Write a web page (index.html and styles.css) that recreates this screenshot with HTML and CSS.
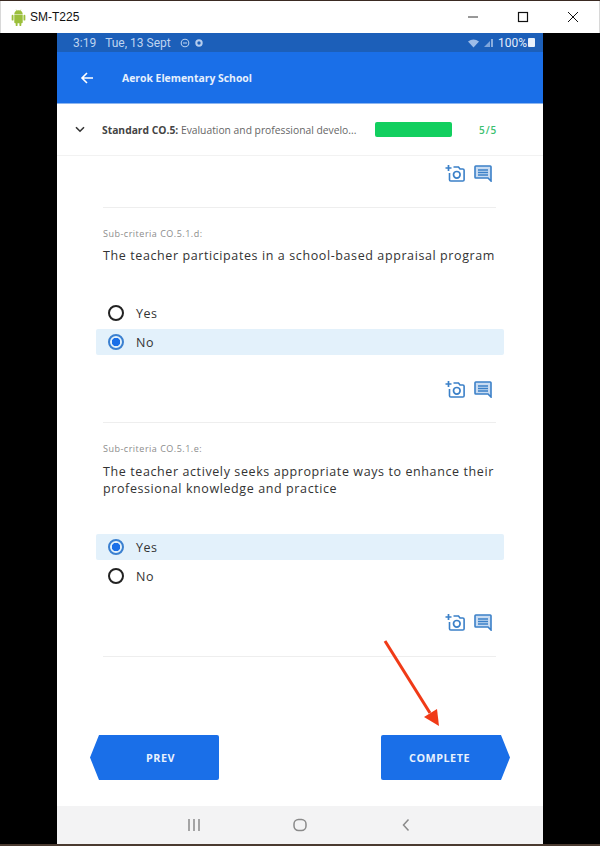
FILE: index.html
```html
<!DOCTYPE html>
<html lang="en">
<head>
<meta charset="utf-8">
<title>SM-T225</title>
<link rel="stylesheet" href="styles.css">
</head>
<body>
<svg class="defs" width="0" height="0" aria-hidden="true">
  <symbol id="cam" viewBox="0 0 20 18">
    <path d="M.5 4h6M3.500 1v6" fill="none" stroke="currentColor" stroke-width="1.700"/>
    <path d="M4.500 9v6.700a1.300 1.300 0 0 0 1.300 1.300h12a1.300 1.300 0 0 0 1.300-1.300V6.300A1.300 1.300 0 0 0 17.800 5h-2.800l-1.500-2H8.500" fill="none" stroke="currentColor" stroke-width="1.600"/>
    <circle cx="11.800" cy="10.800" r="3.300" fill="none" stroke="currentColor" stroke-width="1.700"/>
  </symbol>
  <symbol id="note" viewBox="0 0 18 17">
    <path d="M1.800 1h14.400a.8.800 0 0 1 .8.800V16l-3-3H1.800a.8.800 0 0 1-.8-.8V1.800a.8.800 0 0 1 .8-.8z" fill="#c9dcf2" stroke="currentColor" stroke-width="1.600"/>
    <path d="M4 5h10M4 7.500h10M4 10h10" stroke="currentColor" stroke-width="1.400"/>
  </symbol>
</svg>
<div class="window">
  <header class="titlebar">
    <svg class="droid" viewBox="0 0 16 18" width="15" height="17"><path fill="#9bbf3b" d="M3.500 6h9v8a1 1 0 0 1-1 1H11v2.200a1 1 0 0 1-2 0V15H7v2.200a1 1 0 0 1-2 0V15h-.5a1 1 0 0 1-1-1zM1.700 6a1 1 0 0 1 1 1v4.300a1 1 0 0 1-2 0V7a1 1 0 0 1 1-1zm12.600 0a1 1 0 0 1 1 1v4.300a1 1 0 0 1-2 0V7a1 1 0 0 1 1-1zM3.500 5.400C3.600 3.700 4.500 2.500 5.700 1.800L5 .6l.4-.2.700 1.200a5 5 0 0 1 3.800 0l.7-1.200.4.200-.7 1.200c1.200.7 2.100 1.900 2.200 3.600z"/></svg>
    <span class="app-name">SM-T225</span>
    <div class="win-controls">
      <svg viewBox="0 0 12 12" width="12" height="12"><path d="M1 6h10" stroke="#333" stroke-width="1"/></svg>
      <svg viewBox="0 0 12 12" width="12" height="12"><rect x="1.500" y="1.500" width="9" height="9" fill="none" stroke="#111" stroke-width="1.200"/></svg>
      <svg viewBox="0 0 12 12" width="12" height="12"><path d="M1 1l10 10M11 1L1 11" stroke="#111" stroke-width="1"/></svg>
    </div>
  </header>
  <div class="stage">
    <main class="phone">
      <div class="status">
        <span class="status-time">3:19</span>
        <span class="status-left">Tue, 13 Sept</span>
        <svg class="status-ico" viewBox="0 0 26 10" width="26" height="10"><circle cx="5" cy="5" r="3.800" fill="none" stroke="#b5cdee" stroke-width="1.100"/><path d="M3 5h4" stroke="#b5cdee" stroke-width="1.100"/><circle cx="19" cy="5" r="2.700" fill="none" stroke="#b5cdee" stroke-width="2"/></svg>
        <span class="spacer"></span>
        <svg viewBox="0 0 27 10" width="27" height="10"><path d="M1 3.500a9 9 0 0 1 11 0L6.500 9.500z" fill="#9dbce8"/><path d="M17 9l6-6v6z" fill="#7fa6dc"/><path d="M25 1v8" stroke="#d5e3f6" stroke-width="1.200"/></svg>
        <span class="battery-text">100%</span>
        <span class="battery"></span>
      </div>
      <div class="appbar">
        <svg viewBox="0 0 14 14" width="14" height="14"><path d="M13 7H2M7 2L2 7l5 5" fill="none" stroke="#fff" stroke-width="1.600"/></svg>
        <span class="school">Aerok Elementary School</span>
      </div>
      <div class="standard">
        <svg class="chev" viewBox="0 0 10 7" width="10" height="7"><path d="M1 1.200l4 4 4-4" fill="none" stroke="#333" stroke-width="1.600"/></svg>
        <p class="standard-text"><b>Standard CO.5:</b> Evaluation and professional develo...</p>
        <div class="progress"></div>
        <span class="count">5/5</span>
      </div>
      <div class="content">
        <div class="actions first">
          <svg class="ico" width="20" height="18"><use href="#cam"/></svg>
          <svg class="ico" width="18" height="17"><use href="#note"/></svg>
        </div>
        <section class="item one">
          <p class="label">Sub-criteria CO.5.1.d:</p>
          <p class="question">The teacher participates in a school-based appraisal program</p>
          <div class="options">
            <div class="option"><span class="radio"></span>Yes</div>
            <div class="option selected"><span class="radio"></span>No</div>
          </div>
          <div class="actions">
            <svg class="ico" width="20" height="18"><use href="#cam"/></svg>
            <svg class="ico" width="18" height="17"><use href="#note"/></svg>
          </div>
        </section>
        <section class="item two">
          <p class="label">Sub-criteria CO.5.1.e:</p>
          <p class="question">The teacher actively seeks appropriate ways to enhance their professional knowledge and practice</p>
          <div class="options">
            <div class="option selected"><span class="radio"></span>Yes</div>
            <div class="option"><span class="radio"></span>No</div>
          </div>
          <div class="actions">
            <svg class="ico" width="20" height="18"><use href="#cam"/></svg>
            <svg class="ico" width="18" height="17"><use href="#note"/></svg>
          </div>
        </section>
        <div class="buttons">
          <button class="btn prev">PREV</button>
          <button class="btn next">COMPLETE</button>
        </div>
      </div>
      <nav class="navbar">
        <svg viewBox="0 0 14 14" width="14" height="14"><path d="M2 1v12M7 1v12M12 1v12" stroke="#8a8a8a" stroke-width="1.500"/></svg>
        <svg viewBox="0 0 14 14" width="14" height="14"><rect x="1" y="1.500" width="12" height="11" rx="4.500" fill="none" stroke="#8a8a8a" stroke-width="1.500"/></svg>
        <svg viewBox="0 0 14 14" width="14" height="14"><path d="M9.500 1.500L4.500 7l5 5.500" fill="none" stroke="#8a8a8a" stroke-width="1.500"/></svg>
      </nav>
    </main>
  </div>
  <svg class="arrow" viewBox="0 0 60 90" width="60" height="90"><path d="M2 2l45 72" stroke="#f03a17" stroke-width="3"/><path d="M56 87L41 78l13-8z" fill="#f03a17"/></svg>
</div>
</body>
</html>
```
FILE: styles.css
```css
* { box-sizing: border-box; }
html, body { margin: 0; padding: 0; height: 846px; overflow: hidden; }
body { font-family: "Open Sans", "Noto Sans", sans-serif; background: #000; }
p { margin: 0; }
.defs { position: absolute; }
.window { position: relative; width: 600px; height: 846px; display: flex; flex-direction: column; background: #000; border-top: 1px solid #3a2a22; border-bottom: 2px solid #4a3a30; }
.titlebar { height: 32px; flex: none; display: flex; align-items: center; background: #fff; padding: 0 20px 0 10px; border-left: 1px solid #d8d8d8; border-right: 1px solid #d8d8d8; }
.droid { flex: none; }
.app-name { font-family: "Liberation Sans", Arial, sans-serif; font-size: 12px; color: #111; margin-left: 4px; }
.win-controls { margin-left: auto; display: flex; gap: 38px; align-items: center; }
.stage { flex: 1; min-height: 0; padding: 0 57px; }
.phone { height: 100%; display: flex; flex-direction: column; background: #fff; }
.status { height: 19px; flex: none; background: #1c5fb9; display: flex; align-items: center; padding: 0 8px 0 16px; font-family: Roboto, sans-serif; font-size: 12px; color: #bfd4f0; }
.status-left { margin-left: 9px; }
.status-ico { margin-left: 9px; }
.spacer { flex: 1; }
.battery-text { margin-left: 4px; color: #e2ecf9; }
.battery { width: 7px; height: 9px; background: #e8f0fb; margin-left: 1px; border-radius: 1px; }
.appbar { height: 52px; flex: none; background: #1a6fe8; display: flex; align-items: center; padding: 0 0 0 23px; border-bottom: 1px solid #8db6ef; }
.school { font-size: 10.400px; font-weight: 700; color: #e6f0fd; margin-left: 28px; }
.standard { height: 52px; flex: none; display: flex; align-items: center; padding-left: 18px; border-bottom: 1px solid #f2f2f2; }
.standard-text { width: 272px; margin-left: 17px; font-size: 10.300px; color: #666; white-space: nowrap; }
.standard-text b { color: #444; }
.progress { width: 77px; height: 15px; background: #12cf5f; border-radius: 2px; margin-left: 1px; }
.count { margin-left: 27px; font-size: 10px; font-weight: 600; color: #3bc06f; letter-spacing: 1px; }
.content { flex: 1; min-height: 0; padding: 0 47px 0 46px; display: flex; flex-direction: column; color: #333; }
.actions { display: flex; justify-content: flex-end; align-items: center; gap: 9px; height: 18px; color: #3b80c8; padding-right: 4px; }
.actions.first { margin-top: 8px; }
.ico { display: block; }
.item { border-top: 1px solid #eeeeee; margin-top: 25px; padding-top: 20px; }
.one + .two { margin-top: 24px; }
.two { border-bottom: 1px solid #eeeeee; }
.label { font-size: 9px; color: #8c8c8c; letter-spacing: .5px; line-height: 12px; }
.question { font-size: 12.500px; font-weight: 500; color: #333; line-height: 17px; margin-top: 8px; letter-spacing: .6px; }
.one .question { margin-top: 7px; }
.options { margin-left: -7px; margin-right: -8px; }
.one .options { margin-top: 36px; margin-bottom: 25px; }
.two .options { margin-top: 37px; margin-bottom: 24px; }
.two .actions { margin-bottom: 25px; }
.option { height: 26px; margin-top: 3px; display: flex; align-items: center; padding-left: 12px; font-size: 12.500px; font-weight: 500; letter-spacing: .5px; color: #333; border-radius: 2px; }
.option:first-child { margin-top: 0; }
.option.selected { background: #e3f1fb; }
.radio { width: 16px; height: 16px; border: 2px solid #222; border-radius: 50%; margin-right: 12px; flex: none; }
.selected .radio { border-color: #3b80d0; background: radial-gradient(circle, #1a6fe8 0 4px, transparent 4.500px); }
.buttons { margin: 78px -14px 0 -13px; display: flex; justify-content: space-between; }
.btn { width: 129px; height: 45px; border: 0; padding: 0; background: #1a6fe8; color: #e8f1fd; font-family: inherit; font-size: 10.800px; font-weight: 700; letter-spacing: .5px; }
.prev { clip-path: polygon(9px 0, 100% 0, 100% 100%, 9px 100%, 0 50%); border-radius: 2px; padding-left: 12px; }
.next { clip-path: polygon(0 0, calc(100% - 9px) 0, 100% 50%, calc(100% - 9px) 100%, 0 100%); border-radius: 2px; padding-right: 12px; }
.navbar { height: 38px; flex: none; background: #f3f3f4; display: flex; justify-content: space-between; align-items: center; padding: 0 130px; }
.arrow { position: absolute; left: 383px; top: 638px; }
```
